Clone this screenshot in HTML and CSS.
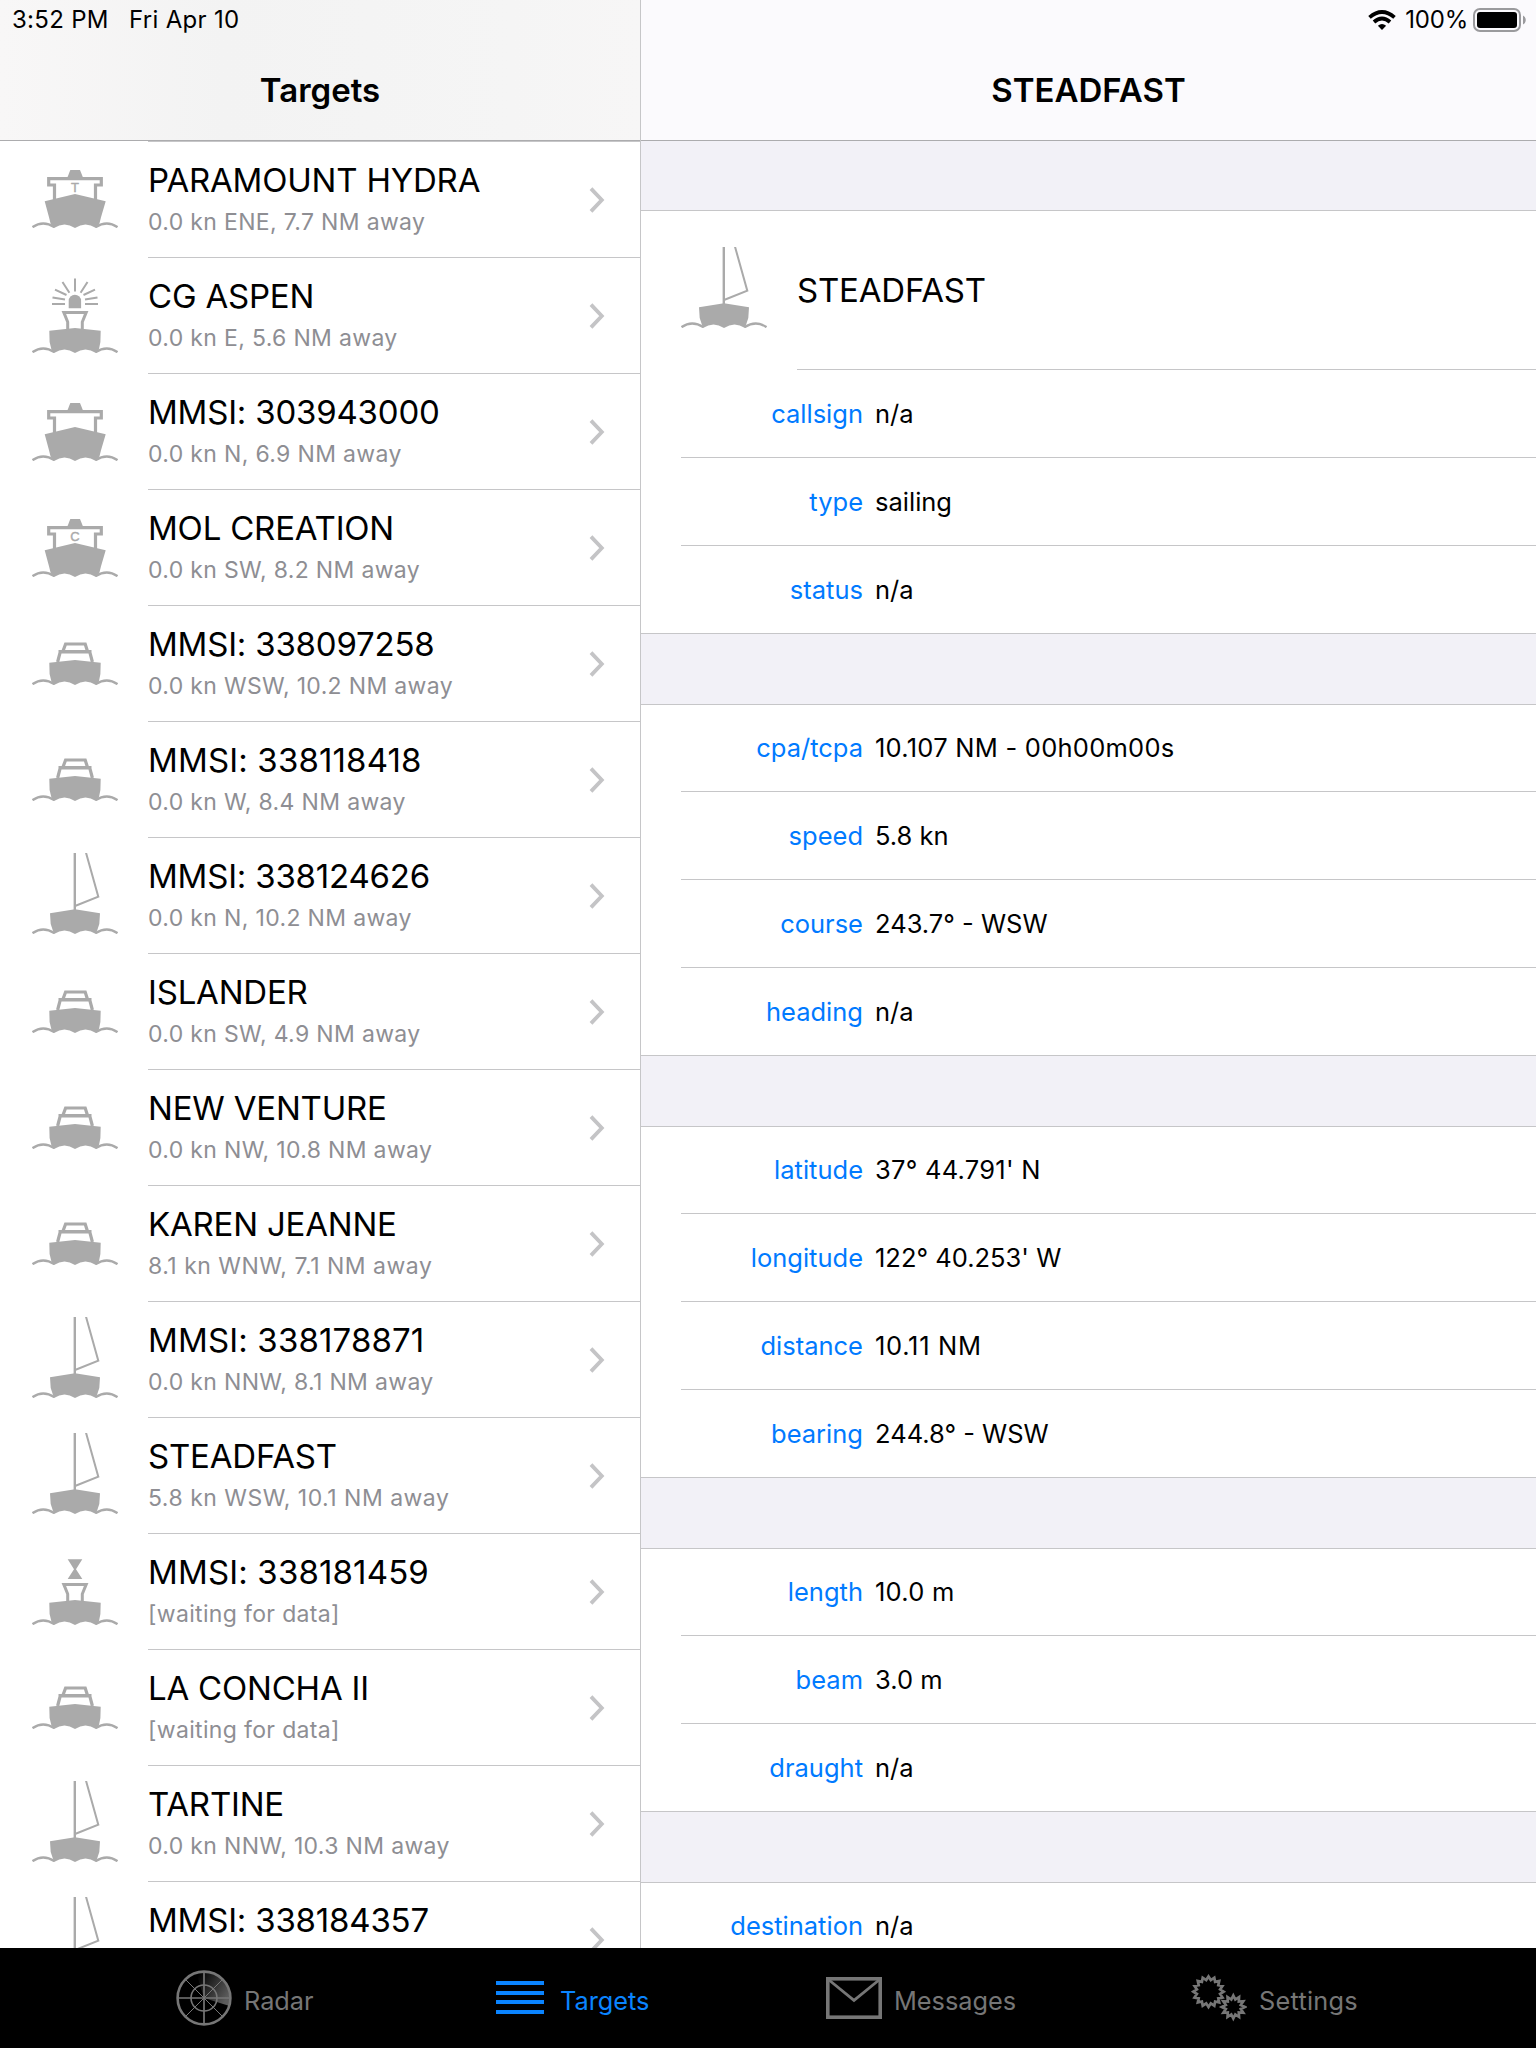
FILE: index.html
```html
<!DOCTYPE html>
<html lang="en">

<head>
    <meta charset="UTF-8">
    <meta name="viewport" content="width=device-width, initial-scale=1.0">
    <title>Targets</title>
    <link rel="stylesheet" href="styles.css">
</head>

<body>
    <!-- Vessel icons, y = 0 is the water line -->
    <svg class="sprites" width="0" height="0">
        <defs>
            <g id="waves" fill="none" stroke="#aaa" stroke-width="2.4">
                <path d="M0.5 -0.8 Q11 -8.2 22.5 -0.8" />
                <path d="M63.5 -0.8 Q75 -8.2 85.5 -0.8" />
            </g>
            <path id="hull" fill="#aaa" d="M17.3 -22.3 L43 -25 L68.7 -22.3 L68.4 -11 L67 -4 L64 0 Q53.5 -7 43 0 Q32.5 -7 22 0 L19.3 -4 L17.6 -11 Z" />
            <path id="basket" fill="none" stroke="#aaa" stroke-width="3" d="M35.7 -22 V-31 L31.8 -40.6 H54.2 L50.3 -31 V-22" />
            <symbol id="ship" viewBox="0 -58 86 58">
                <use href="#waves" />
                <path fill="#aaa" d="M12.7 -26.7 L43 -34 L73.7 -26.7 L69 -10.7 L67.3 -4 L64 0 Q53.5 -7 43 0 Q32.5 -7 22 0 L18.7 -4 L17 -10.7 Z" />
                <path fill="none" stroke="#aaa" stroke-width="3.2" d="M22.5 -28 V-43 H16.7 V-49.3 H69.3 V-43 H63.5 V-28" />
                <path fill="#aaa" d="M38.3 -58 H48 L51.2 -50 H35.2 Z" />
            </symbol>
            <symbol id="motor" viewBox="0 -43 86 43">
                <use href="#waves" />
                <use href="#hull" />
                <path fill="none" stroke="#aaa" stroke-width="3.2" d="M25.6 -23 L28.2 -33 H57.8 L60.4 -23 M31 -34 L33.6 -41 H53.2 L55.4 -34 M26.5 -33.4 H59.5" />
            </symbol>
            <symbol id="sail" viewBox="0 -81 86 81">
                <use href="#waves" />
                <path fill="#aaa" d="M18 -20.7 L43 -24.7 L68 -20.7 L67.3 -10 L64 0 Q53.5 -7 43 0 Q32.5 -7 22 0 L18.7 -10 Z" />
                <path fill="none" stroke="#aaa" stroke-width="2.4" d="M42.8 -82 V-22" />
                <path fill="none" stroke="#aaa" stroke-width="2" d="M53.8 -82 L66.3 -37.3 L43 -28" />
            </symbol>
            <symbol id="light" viewBox="0 -75 86 75">
                <use href="#waves" />
                <use href="#hull" />
                <use href="#basket" />
                <path fill="#aaa" d="M36.7 -44.7 V-52 A6.2 6.2 0 0 1 49.1 -52 V-44.7 Z" />
                <path fill="none" stroke="#aaa" stroke-width="2" d="M43 -74.5 V-61.5 M30.5 -71 L37.4 -60.3 M55.5 -71 L48.6 -60.3 M23 -63.3 L34.5 -58 M63 -63.3 L51.5 -58 M20.5 -55.6 L33 -53.4 M65.5 -55.6 L53 -53.4 M20 -49 H33 M66 -49 H53" />
            </symbol>
            <symbol id="buoy" viewBox="0 -66 86 66">
                <use href="#waves" />
                <use href="#hull" />
                <use href="#basket" />
                <path fill="#aaa" d="M35.7 -65.7 H50.3 L44 -55.8 L50.3 -46 H35.7 L42 -55.8 Z" />
            </symbol>
            <symbol id="chevron" viewBox="0 0 16 26">
                <path fill="none" stroke="#c4c4c6" stroke-width="3.8" d="M2 1.6 L12.8 13 L2 24.4" />
            </symbol>
        </defs>
    </svg>

    <div class="split">
        <!-- Master list -->
        <section class="master">
            <header class="nav nav-master">
                <div class="status"><span class="time">3:52 PM</span><span>Fri Apr 10</span></div>
                <h1>Targets</h1>
            </header>
            <ul class="targets">
                <li class="target">
                    <div class="icon"><svg width="86" height="58"><use href="#ship" /><text class="mark" x="43" y="21.7">T</text></svg></div>
                    <div class="info"><div class="text"><h2>PARAMOUNT HYDRA</h2><p>0.0 kn ENE, 7.7 NM away</p></div><svg width="16" height="26"><use href="#chevron" /></svg></div>
                </li>
                <li class="target">
                    <div class="icon"><svg width="86" height="75"><use href="#light" /></svg></div>
                    <div class="info"><div class="text"><h2>CG ASPEN</h2><p>0.0 kn E, 5.6 NM away</p></div><svg width="16" height="26"><use href="#chevron" /></svg></div>
                </li>
                <li class="target">
                    <div class="icon"><svg width="86" height="58"><use href="#ship" /></svg></div>
                    <div class="info"><div class="text"><h2>MMSI: 303943000</h2><p>0.0 kn N, 6.9 NM away</p></div><svg width="16" height="26"><use href="#chevron" /></svg></div>
                </li>
                <li class="target">
                    <div class="icon"><svg width="86" height="58"><use href="#ship" /><text class="mark" x="43" y="22">C</text></svg></div>
                    <div class="info"><div class="text"><h2>MOL CREATION</h2><p>0.0 kn SW, 8.2 NM away</p></div><svg width="16" height="26"><use href="#chevron" /></svg></div>
                </li>
                <li class="target">
                    <div class="icon"><svg width="86" height="43"><use href="#motor" /></svg></div>
                    <div class="info"><div class="text"><h2>MMSI: 338097258</h2><p>0.0 kn WSW, 10.2 NM away</p></div><svg width="16" height="26"><use href="#chevron" /></svg></div>
                </li>
                <li class="target">
                    <div class="icon"><svg width="86" height="43"><use href="#motor" /></svg></div>
                    <div class="info"><div class="text"><h2 class="loose">MMSI: 338118418</h2><p>0.0 kn W, 8.4 NM away</p></div><svg width="16" height="26"><use href="#chevron" /></svg></div>
                </li>
                <li class="target">
                    <div class="icon"><svg class="tall" width="86" height="81"><use href="#sail" /></svg></div>
                    <div class="info"><div class="text"><h2>MMSI: 338124626</h2><p>0.0 kn N, 10.2 NM away</p></div><svg width="16" height="26"><use href="#chevron" /></svg></div>
                </li>
                <li class="target">
                    <div class="icon"><svg width="86" height="43"><use href="#motor" /></svg></div>
                    <div class="info"><div class="text"><h2>ISLANDER</h2><p>0.0 kn SW, 4.9 NM away</p></div><svg width="16" height="26"><use href="#chevron" /></svg></div>
                </li>
                <li class="target">
                    <div class="icon"><svg width="86" height="43"><use href="#motor" /></svg></div>
                    <div class="info"><div class="text"><h2>NEW VENTURE</h2><p>0.0 kn NW, 10.8 NM away</p></div><svg width="16" height="26"><use href="#chevron" /></svg></div>
                </li>
                <li class="target">
                    <div class="icon"><svg width="86" height="43"><use href="#motor" /></svg></div>
                    <div class="info"><div class="text"><h2>KAREN JEANNE</h2><p class="loose">8.1 kn WNW, 7.1 NM away</p></div><svg width="16" height="26"><use href="#chevron" /></svg></div>
                </li>
                <li class="target">
                    <div class="icon"><svg class="tall" width="86" height="81"><use href="#sail" /></svg></div>
                    <div class="info"><div class="text"><h2 class="loose">MMSI: 338178871</h2><p>0.0 kn NNW, 8.1 NM away</p></div><svg width="16" height="26"><use href="#chevron" /></svg></div>
                </li>
                <li class="target">
                    <div class="icon"><svg class="tall" width="86" height="81"><use href="#sail" /></svg></div>
                    <div class="info"><div class="text"><h2>STEADFAST</h2><p class="loose">5.8 kn WSW, 10.1 NM away</p></div><svg width="16" height="26"><use href="#chevron" /></svg></div>
                </li>
                <li class="target">
                    <div class="icon"><svg width="86" height="66"><use href="#buoy" /></svg></div>
                    <div class="info"><div class="text"><h2 class="loose">MMSI: 338181459</h2><p>[waiting for data]</p></div><svg width="16" height="26"><use href="#chevron" /></svg></div>
                </li>
                <li class="target">
                    <div class="icon"><svg width="86" height="43"><use href="#motor" /></svg></div>
                    <div class="info"><div class="text"><h2>LA CONCHA II</h2><p>[waiting for data]</p></div><svg width="16" height="26"><use href="#chevron" /></svg></div>
                </li>
                <li class="target">
                    <div class="icon"><svg class="tall" width="86" height="81"><use href="#sail" /></svg></div>
                    <div class="info"><div class="text"><h2>TARTINE</h2><p>0.0 kn NNW, 10.3 NM away</p></div><svg width="16" height="26"><use href="#chevron" /></svg></div>
                </li>
                <li class="target">
                    <div class="icon"><svg class="tall" width="86" height="81"><use href="#sail" /></svg></div>
                    <div class="info"><div class="text"><h2>MMSI: 338184357</h2></div><svg width="16" height="26"><use href="#chevron" /></svg></div>
                </li>
            </ul>
        </section>

        <!-- Detail of the selected target -->
        <section class="detail">
            <header class="nav nav-detail">
                <div class="status status-right">
                    <svg class="wifi" width="28" height="20" viewBox="0 0 28 20">
                        <path fill="none" stroke="#000" stroke-width="3.8" d="M1.5 7.4 Q14 -3.4 26.5 7.4 M6 12 Q14 5 22 12" />
                        <path d="M14 20 L9.9 15.8 Q14 12.4 18.1 15.8 Z" />
                    </svg>
                    <span>100%</span>
                    <svg class="battery" width="53" height="24" viewBox="0 0 53 24">
                        <rect x="1" y="1" width="46" height="22" rx="6" fill="none" stroke="#9a9a9d" stroke-width="2" />
                        <rect x="4" y="4" width="40" height="16" rx="3" />
                        <path fill="#9a9a9d" d="M50 7.6 Q52.8 9 52.8 12 Q52.8 15 50 16.4 Z" />
                    </svg>
                </div>
                <h1>STEADFAST</h1>
            </header>
            <div class="group">
                <div class="hero">
                    <svg width="86" height="81"><use href="#sail" /></svg>
                    <h2>STEADFAST</h2>
                </div>
                <dl class="field"><dt>callsign</dt><dd>n/a</dd></dl>
                <dl class="field"><dt>type</dt><dd>sailing</dd></dl>
                <dl class="field"><dt>status</dt><dd>n/a</dd></dl>
            </div>
            <div class="group">
                <dl class="field"><dt>cpa/tcpa</dt><dd class="loose">10.107 NM - 00h00m00s</dd></dl>
                <dl class="field"><dt>speed</dt><dd>5.8 kn</dd></dl>
                <dl class="field"><dt>course</dt><dd>243.7° - WSW</dd></dl>
                <dl class="field"><dt>heading</dt><dd>n/a</dd></dl>
            </div>
            <div class="group">
                <dl class="field"><dt>latitude</dt><dd class="loose">37° 44.791' N</dd></dl>
                <dl class="field"><dt>longitude</dt><dd>122° 40.253' W</dd></dl>
                <dl class="field"><dt>distance</dt><dd class="looser">10.11 NM</dd></dl>
                <dl class="field"><dt>bearing</dt><dd>244.8° - WSW</dd></dl>
            </div>
            <div class="group">
                <dl class="field"><dt>length</dt><dd class="loose">10.0 m</dd></dl>
                <dl class="field"><dt>beam</dt><dd>3.0 m</dd></dl>
                <dl class="field"><dt>draught</dt><dd>n/a</dd></dl>
            </div>
            <div class="group">
                <dl class="field"><dt>destination</dt><dd>n/a</dd></dl>
            </div>
        </section>
    </div>

    <nav class="tabbar">
        <a class="tab">
            <svg width="56" height="56" viewBox="-28 -28 56 56" fill="none" stroke="#767676">
                <defs>
                    <linearGradient id="sweep" x1="0" y1="0" x2="1" y2="0.6">
                        <stop offset="0.1" stop-color="#000" />
                        <stop offset="1" stop-color="#5c5c5c" />
                    </linearGradient>
                </defs>
                <path fill="url(#sweep)" stroke="none" d="M0 0 L-8 -26 A27 27 0 0 1 25.5 8 Z" />
                <path stroke-width="1" d="M-18 -18 L18 18 M18 -18 L-18 18" />
                <path stroke-width="1.7" d="M0 -26 V26 M-26 0 H26" />
                <circle r="13" stroke-width="1.6" />
                <circle r="26.4" stroke-width="2.6" />
            </svg>
            <span>Radar</span>
        </a>
        <a class="tab active">
            <svg width="48" height="34" viewBox="0 0 48 34" fill="#0a84ff">
                <path d="M0 0 H48 V4 H0 Z M0 10 H48 V14 H0 Z M0 19 H48 V23 H0 Z M0 29 H48 V33 H0 Z" />
            </svg>
            <span>Targets</span>
        </a>
        <a class="tab">
            <svg width="56" height="42" viewBox="0 0 56 42" fill="none" stroke="#767676" stroke-width="3.6">
                <rect x="1.8" y="1.8" width="52.4" height="38.4" />
                <path stroke-width="2.8" d="M3 3 L28 23.4 L53 3" />
            </svg>
            <span>Messages</span>
        </a>
        <a class="tab">
            <svg width="56" height="48" viewBox="0 0 56 48" fill="none" stroke="#767676" stroke-width="2.7">
                <polygon transform="translate(17.5 17.7)" points="15.2,0 11.6,2.3 14,5.8 9.8,6.6 10.7,10.7 6.6,9.8 5.8,14 2.3,11.6 0,15.2 -2.3,11.6 -5.8,14 -6.6,9.8 -10.7,10.7 -9.8,6.6 -14,5.8 -11.6,2.3 -15.2,0 -11.6,-2.3 -14,-5.8 -9.8,-6.6 -10.7,-10.7 -6.6,-9.8 -5.8,-14 -2.3,-11.6 0,-15.2 2.3,-11.6 5.8,-14 6.6,-9.8 10.7,-10.7 9.8,-6.6 14,-5.8 11.6,-2.3" />
                <polygon transform="translate(42.3 33)" points="11.5,0 7.5,2 10,5.75 5.5,5.5 5.75,10 2,7.5 0,11.5 -2,7.5 -5.75,10 -5.5,5.5 -10,5.75 -7.5,2 -11.5,0 -7.5,-2 -10,-5.75 -5.5,-5.5 -5.75,-10 -2,-7.5 0,-11.5 2,-7.5 5.75,-10 5.5,-5.5 10,-5.75 7.5,-2" />
            </svg>
            <span class="loose">Settings</span>
        </a>
    </nav>
</body>

</html>
```
FILE: styles.css
```css
* {
    margin: 0;
    padding: 0;
    box-sizing: border-box;
}

body {
    display: flex;
    flex-direction: column;
    height: 2048px;
    overflow: hidden;
    font-family: Inter, "Liberation Sans", sans-serif;
    color: #000;
    background-color: #fff;
}

.sprites {
    position: absolute;
}

svg {
    display: block;
    flex: none;
}

.split {
    display: flex;
    height: 1948px;
    overflow: hidden;
}

.master {
    width: 641px;
    border-right: 1px solid #c6c6c8;
}

.detail {
    flex: 1;
    background-color: #f2f1f7;
}

/* Navigation bars */
.nav {
    height: 141px;
    border-bottom: 1px solid #acacae;
}

.nav-master {
    background: linear-gradient(to right, #f8f7f7, #f3f3f3 35%, #f5f5f5 80%, #f7f6f6);
}

.nav-detail {
    background-color: #fbfafd;
}

.status {
    display: flex;
    align-items: center;
    height: 40px;
    padding: 0 0 1px 12px;
    font-size: 24px;
    letter-spacing: 0.3px;
}

.time {
    width: 117px;
}

.status-right {
    justify-content: flex-end;
    padding-right: 10px;
    letter-spacing: -0.2px;
}

.wifi {
    margin-right: 9px;
}

.battery {
    margin-left: 5px;
}

h1 {
    height: 100px;
    line-height: 101px;
    text-align: center;
    font-size: 33px;
    font-weight: 600;
    letter-spacing: 0;
}

h2 {
    font-size: 33px;
    font-weight: 400;
    letter-spacing: -0.2px;
}

/* Targets list */
.targets {
    list-style: none;
}

.target {
    display: flex;
    height: 116px;
}

.target:first-child {
    height: 117px;
}

.target:first-child .info {
    border-top: 1px solid #c6c6c8;
}

.icon {
    display: flex;
    align-items: center;
    width: 148px;
    padding: 0 0 1px 32px;
}

.tall {
    margin-bottom: 4px;
}

.info {
    display: flex;
    flex: 1;
    align-items: center;
    justify-content: space-between;
    padding-right: 35px;
    border-bottom: 1px solid #c6c6c8;
}

.text {
    height: 115px;
    padding-top: 18px;
    white-space: nowrap;
}

.text h2 {
    line-height: 40px;
}

.text p {
    margin-top: 6px;
    font-size: 23px;
    line-height: 32px;
    letter-spacing: 0.34px;
    color: #8e8e93;
}

.text h2.loose {
    letter-spacing: 0.15px;
}

.text p.loose {
    letter-spacing: 0.5px;
}

.mark {
    font-family: "Liberation Sans", sans-serif;
    font-size: 13px;
    text-anchor: middle;
    fill: #aaa;
    stroke: #aaa;
    stroke-width: 0.4px;
}

/* Detail groups */
.group {
    margin-bottom: 70px;
    border-top: 1px solid #c6c6c8;
    border-bottom: 1px solid #c6c6c8;
    background-color: #fff;
}

.nav-detail + .group {
    margin-top: 69px;
}

.hero {
    display: flex;
    align-items: center;
    height: 158px;
    padding-left: 40px;
}

.hero svg {
    margin-bottom: 5px;
}

.hero h2 {
    flex: 1;
    height: 158px;
    margin-left: 30px;
    line-height: 158px;
}

.field {
    display: flex;
    align-items: center;
    height: 88px;
    margin-left: 40px;
    border-top: 1px solid #c6c6c8;
    font-size: 25.5px;
}

.field:first-child {
    height: 86px;
    padding-bottom: 1px;
    border-top: none;
}

.field dt {
    width: 182px;
    text-align: right;
    white-space: nowrap;
    color: #007aff;
}

.field dd {
    margin-left: 12px;
}

/* The separator under the hero starts at its title */
.hero + .field {
    margin-left: 156px;
}

.hero + .field dt {
    width: 66px;
    direction: rtl;
}

.loose {
    letter-spacing: 0.25px;
}

.looser {
    letter-spacing: 0.7px;
}

/* Tab bar */
.tabbar {
    display: grid;
    grid-template-columns: 320px 330px 365px auto;
    align-items: center;
    height: 100px;
    padding-left: 176px;
    background-color: #000;
}

.tab {
    display: flex;
    align-items: center;
    gap: 12px;
    font-size: 25.3px;
    color: #767676;
}

.tab span {
    padding-top: 4px;
}

.active {
    gap: 16px;
    color: #0a84ff;
}
```
